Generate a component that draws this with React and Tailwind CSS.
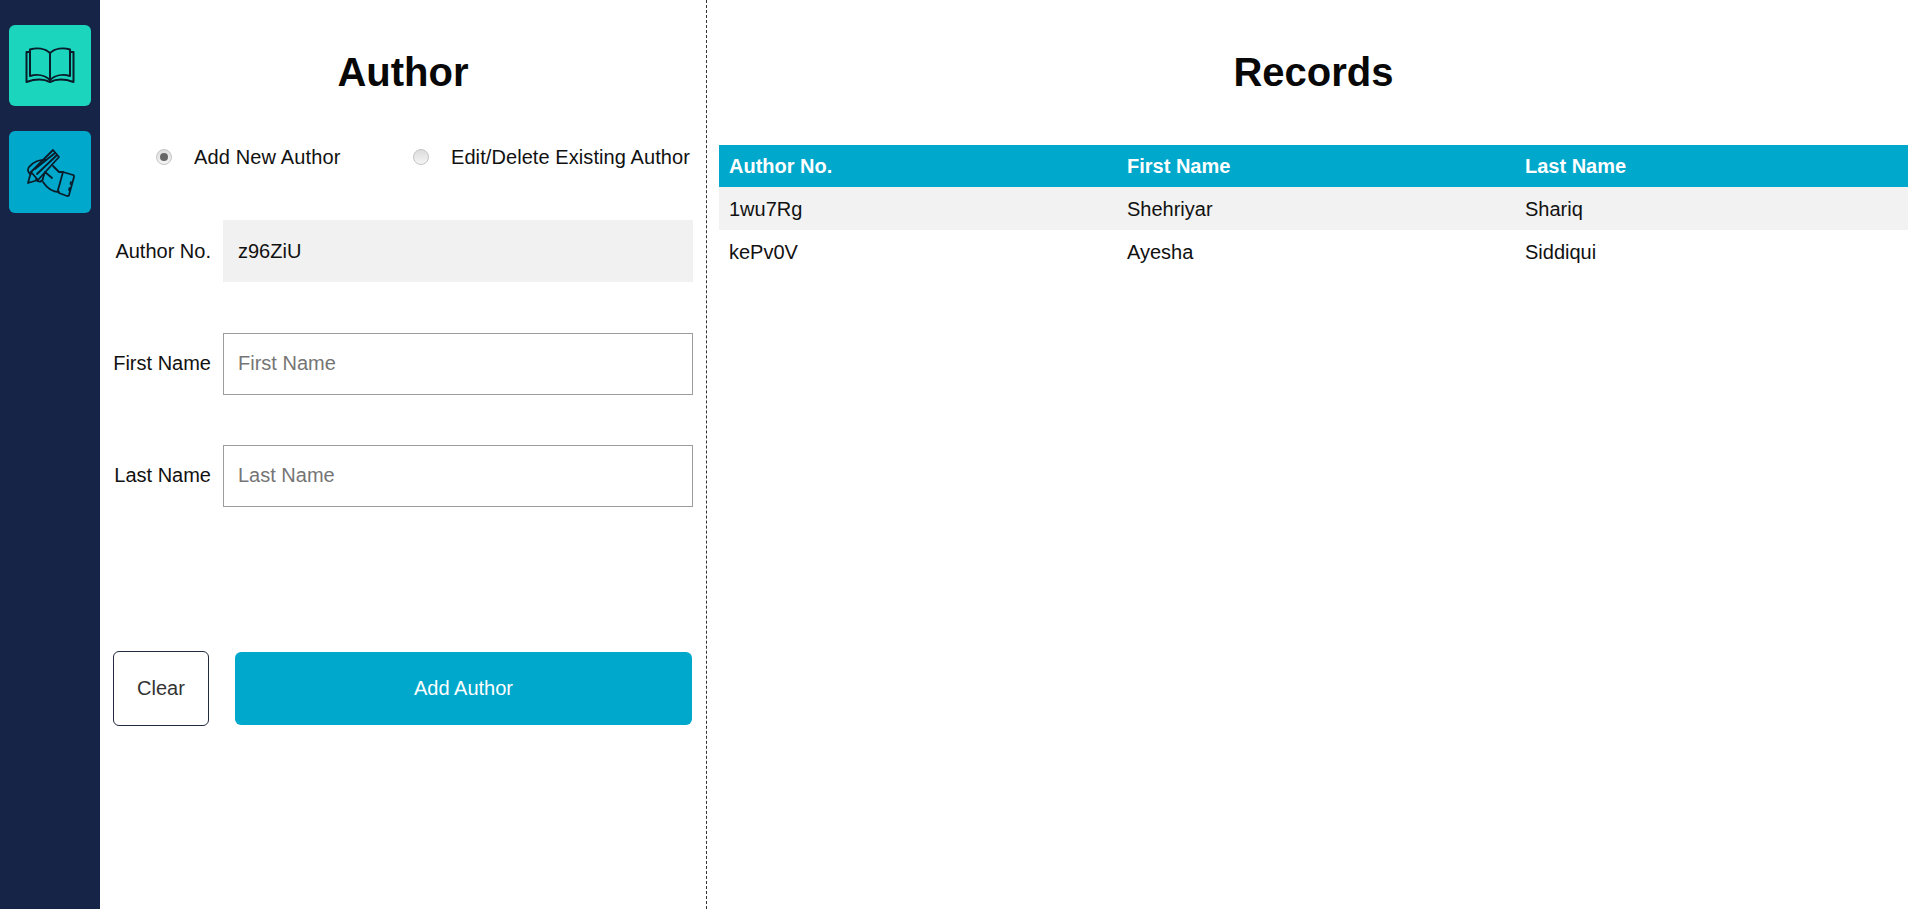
import React from "react";

const BookIcon = () => (
  <svg width="50" height="38" viewBox="0 0 50 38" fill="none" stroke="#0a1c2a" strokeWidth="2" strokeLinejoin="round" strokeLinecap="round">
    <path d="M25 33 C20 28 12 27 5 29 V2.5 C12 0.5 20 1.5 25 6 C30 1.5 38 0.5 45 2.5 V29 C38 27 30 28 25 33 Z" />
    <path d="M25 6 V33" />
    <path d="M5 5 H1.5 V35 C10 32 19 32 25 35 C31 32 40 32 48.5 35 V5 H45" />
  </svg>
);

// drawn in crop coordinates, hand holding a pencil
const WriteIcon = () => (
  <svg width="60" height="54" viewBox="0 0 60 54" fill="none" stroke="#0a1c2a" strokeWidth="1.8" strokeLinejoin="round" strokeLinecap="round">
    <path d="M8 38 L11 27 L33 5 L39 12 L18 35 Z" />
    <path d="M11 27 L18 35" />
    <path d="M15 24 L35 8 M17 29 L37 10" />
    <path d="M26 15 C20 14 13 17 9 22 C7 25 8 28 11 29" />
    <path d="M16 34 C18 38 23 37 23 33 L25 27 L32 33" />
    <path d="M23 37 C27 43 32 47 39 47" />
    <path d="M33 21 L39 27 L43 27" />
    <path d="M43 27 L53 30 C54 30 54 31 54 32 L49 50 C49 51 48 51 47 51 L39 48 C38 47 38 46 38 45 Z" />
    <path d="M51 37 L50.5 39 M49.5 43 L49 45" />
  </svg>
);

const Radio = ({ checked }) => (
  <span className="w-4 h-4 rounded-full border border-[#c4c4c4] bg-gradient-to-b from-[#dcdcdc] to-[#f5f5f5] flex items-center justify-center shrink-0">
    {checked && <span className="w-[8px] h-[8px] rounded-full bg-[#666]" />}
  </span>
);

const Field = ({ label, children, className, labelClassName }) => (
  <div className={`flex items-center ${className}`}>
    <label className={`w-[110px] pr-3 text-right text-[20px] whitespace-nowrap text-[#111] ${labelClassName}`}>{label}</label>
    {children}
  </div>
);

const rows = [
  { id: "1wu7Rg", first: "Shehriyar", last: "Shariq" },
  { id: "kePv0V", first: "Ayesha", last: "Siddiqui" },
];

export default function App() {
  return (
    <div className="flex h-[909px] bg-white text-[#111] font-['Liberation_Sans',Arial,sans-serif]">
      <div className="w-[100px] shrink-0 bg-[#162447] pt-[25px] pl-[9px] flex flex-col gap-[25px]">
        <div className="w-[82px] h-[81px] rounded-md bg-[#1bd6bd] flex items-center justify-center">
          <BookIcon />
        </div>
        <div className="w-[82px] h-[82px] rounded-md bg-[#00a8cc] flex items-center justify-center">
          <WriteIcon />
        </div>
      </div>

      <div className="w-[607px] shrink-0 border-r border-dashed border-[#333] pl-[13px] pr-[13px]">
        <h1 className="text-[40px] font-bold text-center text-[#080808] leading-[46px] mt-[49px]">Author</h1>
        <div className="flex items-center mt-[50px] h-[24px] text-[20px]">
          <div className="ml-[43px] w-[257px] flex items-center gap-[22px] tracking-[0.15px]">
            <Radio checked />
            <span>Add New Author</span>
          </div>
          <div className="flex items-center gap-[22px] whitespace-nowrap tracking-[0.08px]">
            <Radio />
            <span>Edit/Delete Existing Author</span>
          </div>
        </div>

        <Field label="Author No." className="mt-[51px]">
          <div className="w-[470px] h-[62px] bg-[#f1f1f1] px-[15px] flex items-center text-[20px]">z96ZiU</div>
        </Field>
        <Field label="First Name" className="mt-[51px]" labelClassName="pb-[2px]">
          <input
            placeholder="First Name"
            className="w-[470px] h-[62px] border border-[#9c9c9c] px-[14px] pb-[2px] text-[20px] outline-none placeholder:text-[#757575]"
          />
        </Field>
        <Field label="Last Name" className="mt-[50px]" labelClassName="pb-[2px]">
          <input
            placeholder="Last Name"
            className="w-[470px] h-[62px] border border-[#9c9c9c] px-[14px] pb-[2px] text-[20px] outline-none placeholder:text-[#757575]"
          />
        </Field>

        <div className="flex items-center mt-[144px]">
          <button className="w-[96px] h-[75px] pb-[2px] border border-[#222a40] rounded-md text-[20px] text-[#333]">Clear</button>
          <button className="ml-[26px] w-[457px] h-[73px] pb-[2px] rounded-md bg-[#00a8cc] text-white text-[20px]">Add Author</button>
        </div>
      </div>

      <div className="flex-1 pl-[12px] pr-[12px]">
        <h1 className="text-[40px] font-bold text-center text-[#080808] leading-[46px] mt-[49px]">Records</h1>
        <table className="w-full mt-[50px] text-[20px] border-collapse table-fixed">
          <thead>
            <tr className="bg-[#00a8cc] text-white h-[42px]">
              <th className="w-[398px] text-left font-bold px-[10px]">Author No.</th>
              <th className="w-[398px] text-left font-bold px-[10px]">First Name</th>
              <th className="text-left font-bold px-[10px]">Last Name</th>
            </tr>
          </thead>
          <tbody>
            {rows.map((row, idx) => (
              <tr key={row.id} className={`h-[43px] ${idx % 2 === 0 ? "bg-[#f2f2f2]" : "bg-white"}`}>
                <td className="px-[10px]">{row.id}</td>
                <td className="px-[10px]">{row.first}</td>
                <td className="px-[10px]">{row.last}</td>
              </tr>
            ))}
          </tbody>
        </table>
      </div>
    </div>
  );
}
